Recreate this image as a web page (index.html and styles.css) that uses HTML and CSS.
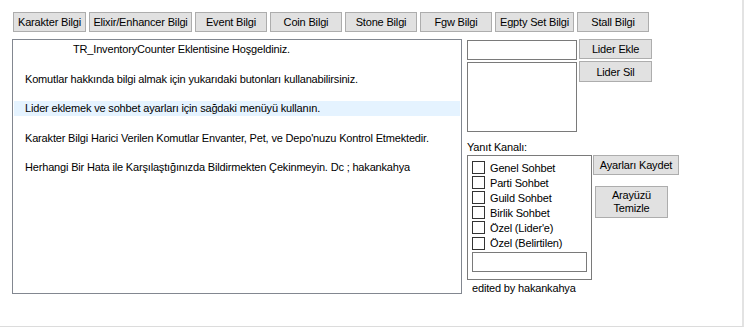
FILE: index.html
```html
<!DOCTYPE html>
<html lang="tr">
<head>
    <meta charset="UTF-8">
    <title>TR_InventoryCounter</title>
    <link rel="stylesheet" href="styles.css">
</head>
<body>
    <div class="ventana">
        <!-- Botones de comandos -->
        <div class="barra">
            <button class="btn w73">Karakter Bilgi</button>
            <button class="btn w103">Elixir/Enhancer Bilgi</button>
            <button class="btn w72">Event Bilgi</button>
            <button class="btn w72">Coin Bilgi</button>
            <button class="btn w72">Stone Bilgi</button>
            <button class="btn w72">Fgw Bilgi</button>
            <button class="btn w79">Egpty Set Bilgi</button>
            <button class="btn w72">Stall Bilgi</button>
        </div>

        <div class="principal">
            <!-- Texto de ayuda -->
            <div class="texto">
                <div class="linea titulo">TR_InventoryCounter Eklentisine Hoşgeldiniz.</div>
                <div class="linea"></div>
                <div class="linea">Komutlar hakkında bilgi almak için yukarıdaki butonları kullanabilirsiniz.</div>
                <div class="linea"></div>
                <div class="linea marcada">Lider eklemek ve sohbet ayarları için sağdaki menüyü kullanın.</div>
                <div class="linea"></div>
                <div class="linea">Karakter Bilgi Harici Verilen Komutlar Envanter, Pet, ve Depo'nuzu Kontrol Etmektedir.</div>
                <div class="linea"></div>
                <div class="linea">Herhangi Bir Hata ile Karşılaştığınızda Bildirmekten Çekinmeyin. Dc ; hakankahya</div>
            </div>

            <!-- Panel derecho -->
            <div class="panel">
                <div class="lideres">
                    <div class="lideres__lista">
                        <div class="caja entrada"></div>
                        <div class="caja lista"></div>
                    </div>
                    <div class="lideres__botones">
                        <button class="btn lider">Lider Ekle</button>
                        <button class="btn lider alto">Lider Sil</button>
                    </div>
                </div>

                <div class="etiqueta">Yanıt Kanalı:</div>

                <div class="canales">
                    <div class="caja grupo">
                        <label class="opcion"><span class="check"></span>Genel Sohbet</label>
                        <label class="opcion"><span class="check"></span>Parti Sohbet</label>
                        <label class="opcion"><span class="check"></span>Guild Sohbet</label>
                        <label class="opcion"><span class="check"></span>Birlik Sohbet</label>
                        <label class="opcion"><span class="check"></span>Özel (Lider'e)</label>
                        <label class="opcion"><span class="check"></span>Özel (Belirtilen)</label>
                        <div class="caja entrada chica"></div>
                    </div>
                    <div class="canales__botones">
                        <button class="btn guardar">Ayarları Kaydet</button>
                        <button class="btn limpiar">Arayüzü<br>Temizle</button>
                    </div>
                </div>

                <div class="firma">edited by hakankahya</div>
            </div>
        </div>
    </div>
</body>
</html>
```

FILE: styles.css
```css
* {
    box-sizing: border-box;
}
body {
    margin: 0;
    background-color: #fff;
    font-family: "Liberation Sans", Arial, sans-serif;
    font-size: 11px;
    letter-spacing: -0.17px;
    color: #000;
}

.ventana {
    width: 744px;
    height: 327px;
    border-right: 2px solid #e3e3e3;
    border-bottom: 1px solid #dcdcdc;
}

/* Botones */
.btn {
    font-family: inherit;
    font-size: 11px;
    letter-spacing: inherit;
    color: #000;
    background-color: #e1e1e1;
    border: 1px solid #adadad;
    border-radius: 0;
    padding: 0;
    height: 20px;
    line-height: 16px;
    text-align: center;
}
.w73 { width: 73px; }
.w103 { width: 103px; }
.w72 { width: 72px; }
.w79 { width: 79px; }

.barra {
    display: flex;
    gap: 3px;
    padding: 12px 0 0 13px;
}

.principal {
    display: flex;
    gap: 5px;
    padding: 7px 0 0 12px;
}

/* Cuadro de texto */
.texto {
    width: 450px;
    height: 255px;
    border: 1px solid #828790;
    padding: 2px 1px 0 1px;
}
.linea {
    height: 14.75px;
    line-height: 15px;
    padding-left: 11px;
    white-space: nowrap;
}
.linea.titulo {
    padding-left: 59px;
}
.linea.marcada {
    background-color: #e5f3ff;
}

/* Panel derecho */
.panel {
    display: flex;
    flex-direction: column;
}
.caja {
    border: 1px solid #7a7a7a;
    background-color: #fff;
}
.lideres {
    display: flex;
    gap: 2px;
}
.lideres__lista {
    display: flex;
    flex-direction: column;
    gap: 2px;
    padding-top: 1px;
}
.entrada {
    width: 110px;
    height: 20px;
}
.lista {
    width: 110px;
    height: 70px;
}
.lideres__botones {
    display: flex;
    flex-direction: column;
    gap: 2px;
}
.lider {
    width: 73px;
}
.lider.alto {
    height: 21px;
}

.etiqueta {
    margin-top: 8px;
    height: 14px;
    line-height: 14px;
}

.canales {
    display: flex;
    gap: 1px;
    margin-top: 1px;
}
.grupo {
    width: 125px;
    height: 125px;
    padding: 4px 0 0 4px;
}
.opcion {
    display: flex;
    align-items: center;
    gap: 5px;
    height: 15.1px;
}
.check {
    width: 13px;
    height: 13px;
    border: 1px solid #333;
    background-color: #fff;
}
.chica {
    width: 115px;
    margin-top: 1px;
}
.canales__botones {
    display: flex;
    flex-direction: column;
    align-items: flex-start;
    gap: 11px;
}
.guardar {
    width: 86px;
}
.limpiar {
    width: 73px;
    height: 32px;
    line-height: 13px;
    margin-left: 2px;
}

.firma {
    margin-top: 1px;
    padding-left: 5px;
    line-height: 14px;
}
```
